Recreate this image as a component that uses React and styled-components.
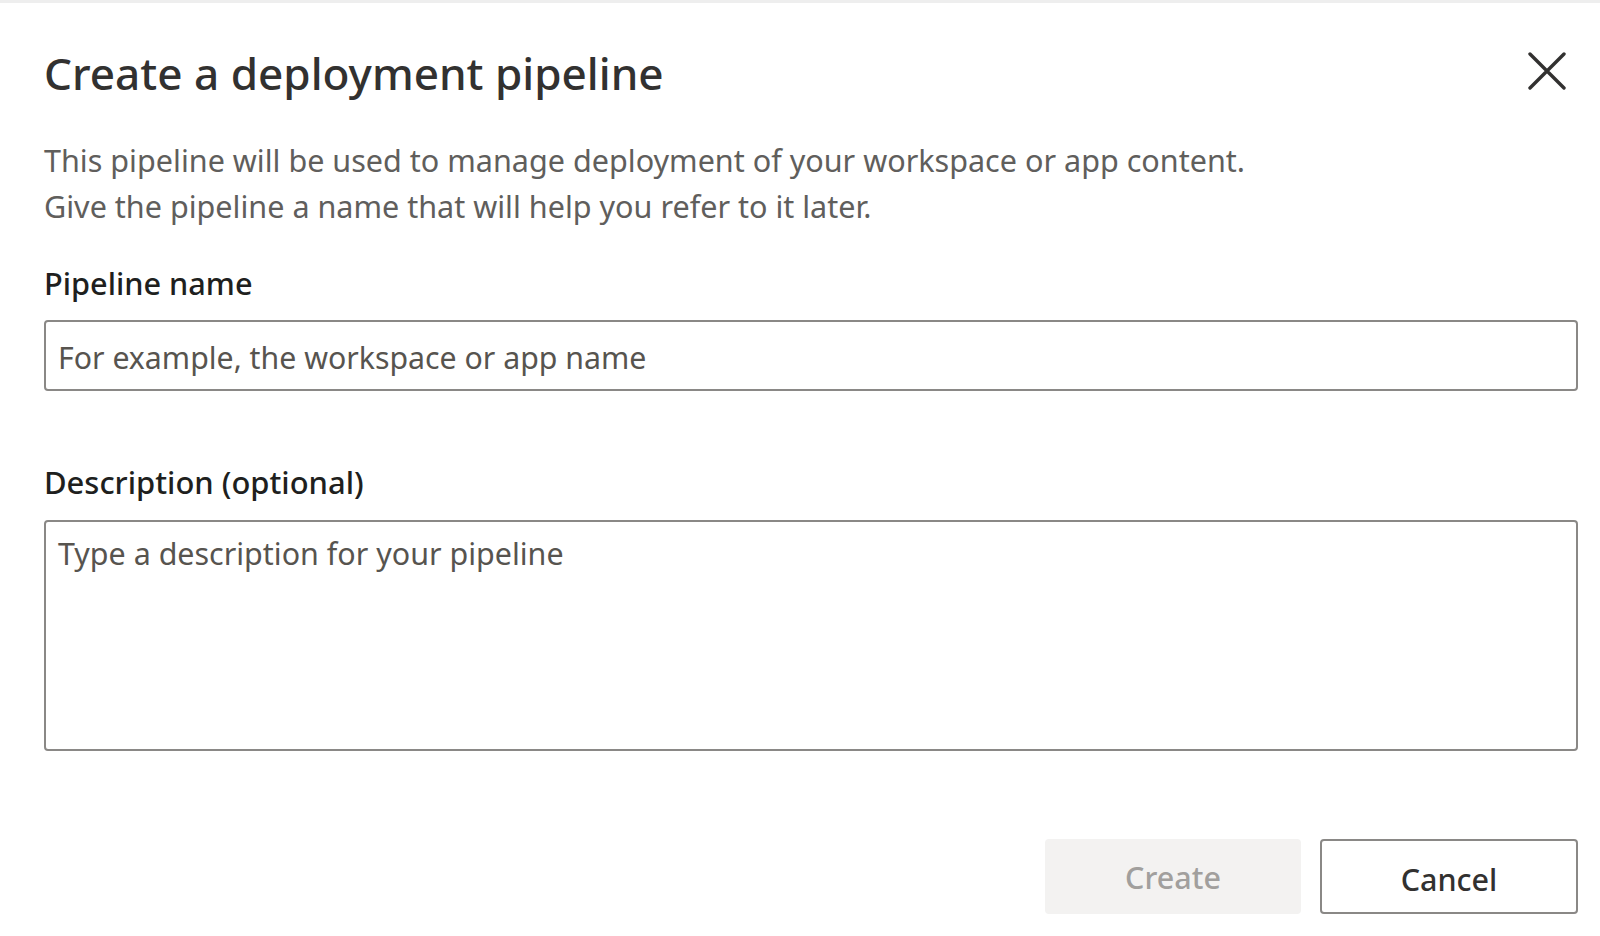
import React from "react";
import styled, { createGlobalStyle } from "styled-components";

const GlobalStyle = createGlobalStyle`
  html, body {
    margin: 0;
    padding: 0;
    background: #fff;
  }
  * {
    box-sizing: border-box;
  }
`;

const FONT = `"Noto Sans", "Open Sans", sans-serif`;

const App = () => {
  return (
    <>
      <GlobalStyle />
      <Dialog>
        <Header>
          <Title>Create a deployment pipeline</Title>
          <CloseButton aria-label="Close">
            <svg width="38" height="38" viewBox="0 0 38 38" fill="none">
              <path d="M2 2L36 36M36 2L2 36" stroke="#323130" strokeWidth="3.4" strokeLinecap="round" />
            </svg>
          </CloseButton>
        </Header>
        <Description>
          This pipeline will be used to manage deployment of your workspace or app content.
          <br />
          Give the pipeline a name that will help you refer to it later.
        </Description>
        <Field>
          <Label htmlFor="name">Pipeline name</Label>
          <TextInput id="name" placeholder="For example, the workspace or app name" />
        </Field>
        <Field $top={69}>
          <Label htmlFor="desc" $gap={16} $size={30.95}>Description (optional)</Label>
          <TextArea id="desc" placeholder="Type a description for your pipeline" />
        </Field>
        <Footer>
          <Button disabled>Create</Button>
          <Button $outline>Cancel</Button>
        </Footer>
      </Dialog>
    </>
  );
};

const Dialog = styled.div`
  width: 1600px;
  height: 936px;
  padding: 0 22px 0 44px;
  border-top: 3px solid #eeeeee;
  font-family: ${FONT};
  overflow: hidden;
`;

const Header = styled.div`
  display: flex;
  justify-content: space-between;
  align-items: flex-start;
  padding-top: 40px;
  height: 134px;
`;

const Title = styled.h1`
  margin: 0;
  font-size: 44.1px;
  line-height: 60px;
  font-weight: 500;
  color: #323130;
`;

const CloseButton = styled.button`
  border: 0;
  background: none;
  padding: 0;
  margin: 9px 12px 0 0;
  display: flex;
`;

const Description = styled.p`
  margin: 0;
  font-size: 30.56px;
  line-height: 46px;
  color: #605e5c;
`;

const Field = styled.div`
  display: flex;
  flex-direction: column;
  margin-top: ${(p) => p.$top || 32}px;
`;

const Label = styled.label`
  font-size: ${(p) => p.$size || 30.7}px;
  line-height: 44px;
  font-weight: 500;
  color: #201f1e;
  margin-bottom: ${(p) => p.$gap || 15}px;
`;

const TextInput = styled.input`
  width: 100%;
  height: 71px;
  padding: 3px 12px 0;
  border: 2px solid #8a8886;
  border-radius: 4px;
  font-family: ${FONT};
  font-size: 30.27px;
  outline: none;
  &::placeholder {
    color: #57544f;
    opacity: 1;
  }
`;

const TextArea = styled.textarea`
  width: 100%;
  height: 231px;
  padding: 8px 12px;
  border: 2px solid #8a8886;
  border-radius: 4px;
  font-family: ${FONT};
  font-size: 30.45px;
  line-height: 46px;
  outline: none;
  resize: none;
  display: block;
  &::placeholder {
    color: #57544f;
    opacity: 1;
  }
`;

const Footer = styled.div`
  display: flex;
  justify-content: flex-end;
  gap: 19px;
  margin-top: 88px;
`;

const Button = styled.button`
  width: ${(p) => (p.$outline ? 258 : 256)}px;
  height: 75px;
  padding: ${(p) => (p.$outline ? "5px" : "1px")} 0 0;
  font-family: ${FONT};
  font-size: 30.5px;
  font-weight: 500;
  border-radius: 4px;
  color: ${(p) => (p.disabled ? "#a19f9d" : "#323130")};
  background: ${(p) => (p.disabled ? "#f3f2f1" : "#fff")};
  border: ${(p) => (p.$outline ? "2px solid #8a8886" : "none")};
`;

export default App;
